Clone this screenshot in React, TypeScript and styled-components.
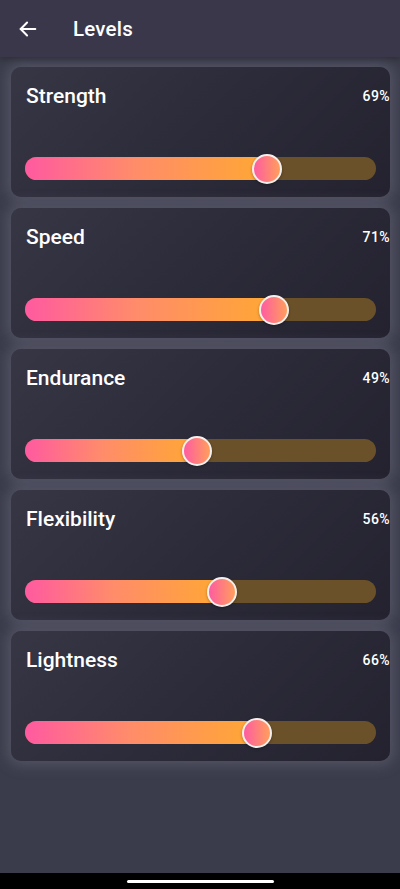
import React from "react";
import styled, { createGlobalStyle } from "styled-components";

const GlobalStyle = createGlobalStyle`
  html, body { margin: 0; padding: 0; background: #3b3c4b; }
  * { box-sizing: border-box; }
  body { font-family: Roboto, "Noto Sans", Arial, sans-serif; color: #fff; }
`;

const levels = [
  { name: "Strength", value: 69 },
  { name: "Speed", value: 71 },
  { name: "Endurance", value: 49 },
  { name: "Flexibility", value: 56 },
  { name: "Lightness", value: 66 },
];

const Screen = styled.div`
  width: 400px;
  height: 889px;
  display: flex;
  flex-direction: column;
  background: #3b3c4b;
  overflow: hidden;
`;

const AppBar = styled.header`
  height: 57px;
  flex-shrink: 0;
  display: flex;
  align-items: center;
  padding: 0 0 0 17px;
  background: #3b374b;
  box-shadow: 0 2px 6px rgba(0, 0, 0, 0.25);
  position: relative;
  z-index: 1;
`;

const BackButton = styled.button`
  width: 22px;
  height: 22px;
  padding: 0;
  border: 0;
  background: none;
  display: flex;
  align-items: center;
  justify-content: center;
  margin-right: 34px;
`;

const Title = styled.h1`
  margin: 0;
  font-size: 20.5px;
  font-weight: 500;
  letter-spacing: 0.2px;
`;

const List = styled.main`
  flex: 1;
  display: flex;
  flex-direction: column;
  gap: 11px;
  padding: 10px 10px 0 11px;
`;

const Card = styled.section`
  height: 130px;
  display: flex;
  flex-direction: column;
  padding: 15px 14px 17px 15px;
  border-radius: 10px;
  background: linear-gradient(135deg, #363645 0%, #2c2b39 50%, #24222f 100%);
  box-shadow: 0 0 14px 4px rgba(130, 130, 150, 0.35);
`;

const CardHead = styled.div`
  display: flex;
  align-items: center;
  justify-content: space-between;
  margin-right: -14px;
`;

const Name = styled.h2`
  margin: 0;
  font-size: 21px;
  line-height: 28px;
  font-weight: 500;
`;

const Percent = styled.span`
  font-family: Roboto, Inter, sans-serif;
  font-size: 14px;
  font-weight: 500;
  letter-spacing: 0.4px;
`;

const Track = styled.div`
  position: relative;
  margin-top: auto;
  margin-left: -1px;
  height: 23px;
  border-radius: 12px;
  background: #6b5129;
`;

const Fill = styled.div`
  height: 100%;
  border-radius: 12px 0 0 12px;
  background: linear-gradient(90deg, #ff5aa0 0%, #ff8c6a 45%, #ffa833 100%);
`;

const Thumb = styled.div`
  position: absolute;
  top: 50%;
  width: 30px;
  height: 30px;
  border-radius: 50%;
  border: 2px solid #f4f0ee;
  background: linear-gradient(90deg, #ff5ca0 0%, #ff9f5c 100%);
  transform: translate(-50%, -50%);
  box-shadow: 0 1px 3px rgba(0, 0, 0, 0.3);
`;

const SystemBar = styled.div`
  height: 16px;
  flex-shrink: 0;
  background: #000;
  display: flex;
  justify-content: center;
  align-items: center;
`;

const HomeIndicator = styled.div`
  width: 147px;
  height: 3px;
  border-radius: 2px;
  background: #fff;
`;

const ArrowIcon = () => (
  <svg width="22" height="22" viewBox="0 0 24 24" fill="none" stroke="#fff" strokeWidth="2.2" strokeLinecap="round" strokeLinejoin="round">
    <path d="M20 12H4" />
    <path d="M11 5l-7 7 7 7" />
  </svg>
);

export default function App() {
  return (
    <>
      <GlobalStyle />
      <Screen>
        <AppBar>
          <BackButton aria-label="Back">
            <ArrowIcon />
          </BackButton>
          <Title>Levels</Title>
        </AppBar>
        <List>
          {levels.map((l) => (
            <Card key={l.name}>
              <CardHead>
                <Name>{l.name}</Name>
                <Percent>{l.value}%</Percent>
              </CardHead>
              <Track>
                <Fill style={{ width: `${l.value}%` }} />
                <Thumb style={{ left: `${l.value}%` }} />
              </Track>
            </Card>
          ))}
        </List>
        <SystemBar>
          <HomeIndicator />
        </SystemBar>
      </Screen>
    </>
  );
}
